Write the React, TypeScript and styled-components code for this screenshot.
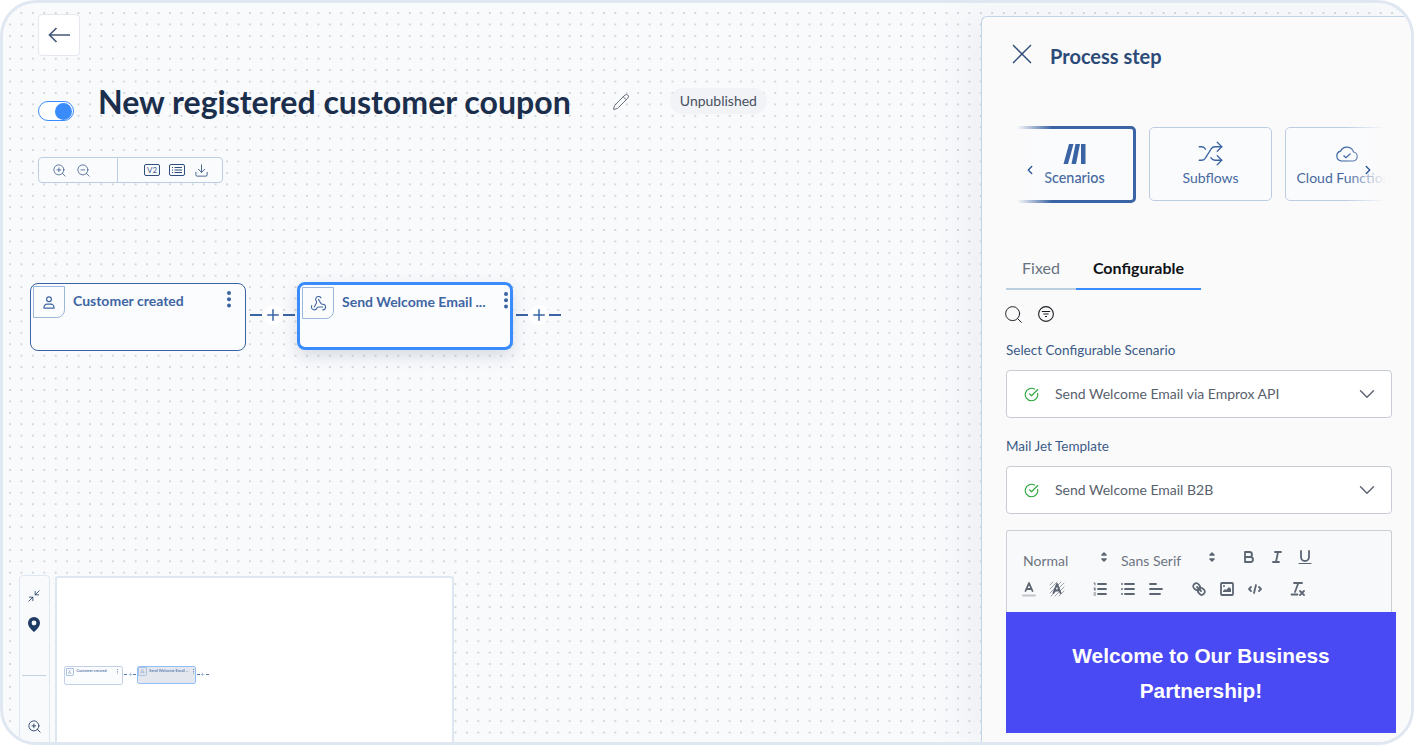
import styled, { createGlobalStyle } from 'styled-components'
import {
  ChevronDown,
  ChevronLeft,
  ChevronRight,
  CircleCheckBig,
  Download,
  Minimize2,
  Pencil,
  Plus,
  Search,
  Shuffle,
  Webhook,
  ZoomIn,
  ZoomOut,
} from 'lucide-react'
import type { ReactNode } from 'react'

const GlobalStyle = createGlobalStyle`
  html, body {
    margin: 0;
    height: 100%;
    overflow: hidden;
    background: #ffffff;
    font-family: 'Lato', 'Liberation Sans', sans-serif;
  }
  * { box-sizing: border-box; }
`

const Frame = styled.div`
  position: relative;
  width: 1414px;
  height: 745px;
  border: 3px solid #dfe7f1;
  border-radius: 36px;
  overflow: hidden;
  background-color: #f9fafc;
  background-image: radial-gradient(circle, #d2d6dc 0.7px, transparent 1.05px);
  background-size: 11.43px 11.43px;
  background-position: 1.3px 4.3px;
`

const Canvas = styled.div`
  padding: 11px 0 0 35px;
`

const BackButton = styled.button`
  display: flex;
  align-items: center;
  justify-content: center;
  width: 42px;
  height: 42px;
  padding: 0;
  background: #ffffff;
  border: 1px solid #e3e8ef;
  border-radius: 4px;
  color: #46597a;
`

const TitleRow = styled.div`
  display: flex;
  align-items: center;
  height: 40px;
  margin-top: 26px;
`

const Toggle = styled.div`
  position: relative;
  flex: none;
  width: 36px;
  height: 20px;
  margin-top: 18px;
  background: #ffffff;
  border: 1px solid #3a8bfb;
  border-radius: 10px;
`

const Knob = styled.span`
  position: absolute;
  top: 0.5px;
  right: 1px;
  width: 17px;
  height: 17px;
  border-radius: 50%;
  background: #3a8bfb;
`

const Title = styled.h1`
  margin: -1px 0 0 24px;
  font-size: 32.1px;
  font-weight: 700;
  line-height: 40px;
  color: #1b2f4d;
  white-space: nowrap;
`

const EditIcon = styled.span`
  display: flex;
  margin-left: 41px;
  color: #5f6774;
`

const Badge = styled.span`
  margin-left: 40px;
  margin-top: -2px;
  padding: 0 10px;
  height: 26px;
  line-height: 26px;
  font-size: 14px;
  color: #48505e;
  background: #f1f3f7;
  border-radius: 13px;
`

const ViewTools = styled.div`
  display: flex;
  width: 185px;
  height: 26px;
  margin-top: 35px;
  background: #fafbfd;
  border: 1px solid #bccfe2;
  border-radius: 4px;
  color: #3f5f8c;
`

const ToolGroup = styled.div<{ $divided?: boolean; $gap: number; $inset: number }>`
  display: flex;
  align-items: center;
  gap: ${(p) => p.$gap}px;
  padding-left: ${(p) => p.$inset}px;
  width: ${(p) => (p.$divided ? 'auto' : '78px')};
  flex: ${(p) => (p.$divided ? 1 : 'none')};
  border-left: ${(p) => (p.$divided ? '1px solid #bccfe2' : 'none')};
`

const VersionTag = styled.span`
  width: 16px;
  height: 12px;
  font-size: 8px;
  line-height: 10px;
  text-align: center;
  color: #3f5f8c;
  border: 1px solid #2f4f7f;
  border-radius: 2px;
`

const GraphPlace = styled.div`
  position: absolute;
  left: 27px;
  top: 280px;
`

const GraphRow = styled.div`
  display: flex;
  align-items: flex-start;
`

const nodeBorder = (selected?: boolean, mini?: boolean) => {
  if (selected) return mini ? '3px solid #7db4fa' : '3px solid #3a8bfb'
  return mini ? '1px solid #b7c7e2' : '1px solid #3a64a3'
}

const Node = styled.div<{ $selected?: boolean; $mini?: boolean }>`
  position: relative;
  display: flex;
  align-items: flex-start;
  width: 216px;
  height: 68px;
  margin-top: ${(p) => (p.$selected ? '-1px' : '0')};
  padding: 2px;
  background: ${(p) => (p.$mini && p.$selected ? '#e0e3ea' : '#fbfcfd')};
  border: ${(p) => nodeBorder(p.$selected, p.$mini)};
  border-radius: 8px;
  box-shadow: ${(p) => (p.$selected && !p.$mini ? '0 6px 16px rgba(40, 60, 100, 0.16)' : 'none')};
`

const NodeIcon = styled.span`
  display: flex;
  align-items: center;
  justify-content: center;
  flex: none;
  width: 32px;
  height: 32px;
  color: #3f65a3;
  border: 1px solid #9ab8dc;
  border-radius: 0 0 8px 0;
`

const NodeName = styled.span`
  margin: 6px 0 0 8px;
  font-size: 14px;
  font-weight: 700;
  line-height: 18px;
  color: #3f65a3;
  white-space: nowrap;
`

const Kebab = styled.svg<{ $selected?: boolean }>`
  position: absolute;
  top: 7px;
  right: ${(p) => (p.$selected ? '2px' : '14px')};
`

const Connector = styled.div<{ $afterSelected?: boolean }>`
  display: flex;
  align-items: center;
  flex: none;
  width: 51px;
  height: 24px;
  margin-top: 20px;
  padding-left: ${(p) => (p.$afterSelected ? '3px' : '4px')};
  color: #3a64a3;
`

const Dash = styled.span`
  width: 12px;
  height: 2px;
  background: #3a64a3;
`

const PlusBubble = styled.span`
  display: flex;
  align-items: center;
  justify-content: center;
  width: 20px;
  height: 20px;
  margin: 0 0.5px;
  background: #ffffff;
  border-radius: 50%;
`

const MiniTools = styled.div`
  position: absolute;
  left: 16px;
  top: 572px;
  display: flex;
  flex-direction: column;
  align-items: center;
  width: 31px;
  height: 175px;
  padding: 13px 1px 0 0;
  background: #f9fafc;
  border: 1px solid #dfe7f1;
  border-radius: 4px;
  color: #1f3a63;
`

const MiniPin = styled.svg`
  margin-top: 14px;
`

const MiniRule = styled.span`
  width: 24px;
  height: 1px;
  margin: 43px 0 43px;
  background: #bfd2e6;
`

const Minimap = styled.div`
  position: absolute;
  left: 52px;
  top: 573px;
  width: 399px;
  height: 175px;
  background: #ffffff;
  border: 2px solid #dfe7f1;
  border-radius: 3px;
`

const MiniPlace = styled.div`
  position: absolute;
  left: 7px;
  top: 88px;
`

const MiniGraph = styled.div`
  zoom: 0.273;
  filter: blur(2px);
  opacity: 0.85;
`

const Panel = styled.aside`
  position: absolute;
  top: 13px;
  left: 978px;
  right: 0;
  bottom: 0;
  padding: 0 19px 0 24px;
  background: #fafafb;
  border-top: 1px solid #c3d4e6;
  border-left: 1px solid #c3d4e6;
  border-top-left-radius: 6px;
  box-shadow: -18px 0 36px rgba(60, 80, 120, 0.06);
`

const PanelHead = styled.div`
  display: flex;
  align-items: flex-start;
  height: 24px;
  margin-top: 27px;
`

const CloseButton = styled.svg`
  flex: none;
  margin: 0 0 0 6px;
  color: #2c4a78;
`

const PanelTitle = styled.h2`
  margin: 0 0 0 18px;
  font-size: 20px;
  font-weight: 700;
  line-height: 24px;
  color: #2c4a78;
`

const Carousel = styled.div`
  position: relative;
  display: flex;
  align-items: center;
  gap: 13px;
  height: 78px;
  margin: 57px 6px 0 0;
  padding-left: 7px;
  overflow: hidden;
`

const TypeCard = styled.div<{ $active?: boolean }>`
  display: flex;
  flex-direction: column;
  align-items: center;
  flex: none;
  width: 123px;
  height: ${(p) => (p.$active ? '77px' : '74px')};
  padding-top: 13px;
  color: #3a64a3;
  background: #fafbfd;
  border: ${(p) => (p.$active ? '3px solid #3a64a3' : '1px solid #bccde2')};
  border-radius: 5px;
`

const CardIcon = styled.span`
  display: flex;
  align-items: center;
  justify-content: center;
  height: 24px;
`

const CardLabel = styled.span<{ $active?: boolean }>`
  margin-top: ${(p) => (p.$active ? '3px' : '4px')};
  font-size: ${(p) => (p.$active ? '14.4px' : '14px')};
  font-weight: ${(p) => (p.$active ? 500 : 400)};
  line-height: 18px;
  color: #46699f;
  white-space: nowrap;
`

const Fade = styled.div<{ $side: 'left' | 'right' }>`
  position: absolute;
  top: 0;
  bottom: 0;
  ${(p) => p.$side}: 0;
  width: ${(p) => (p.$side === 'left' ? '46px' : '40px')};
  background: linear-gradient(
    to ${(p) => p.$side},
    rgba(250, 250, 251, 0),
    rgba(250, 250, 251, 1) ${(p) => (p.$side === 'left' ? '76%' : '100%')}
  );
`

const Arrow = styled.span<{ $side: 'left' | 'right' }>`
  position: absolute;
  top: 38px;
  ${(p) => p.$side}: ${(p) => (p.$side === 'left' ? '17px' : '11px')};
  display: flex;
  color: #2f5a98;
`

const Tabs = styled.div`
  display: flex;
  height: 42px;
  margin-top: 45px;
`

const Tab = styled.div<{ $active?: boolean }>`
  width: ${(p) => (p.$active ? '125px' : '70px')};
  padding-top: 10px;
  font-size: 16px;
  line-height: 20px;
  text-align: center;
  font-weight: ${(p) => (p.$active ? 700 : 400)};
  color: ${(p) => (p.$active ? '#0f1216' : '#69737f')};
  border-bottom: 2px solid ${(p) => (p.$active ? '#3a8bfb' : '#bccfe0')};
`

const SearchRow = styled.div`
  display: flex;
  align-items: center;
  gap: 14px;
  height: 16px;
  margin: 16px 0 0 -3px;
  color: #1a1d22;
`

const FieldLabel = styled.label`
  display: block;
  margin-top: 20px;
  font-size: 13.5px;
  line-height: 16px;
  color: #3b5a85;
`

const SelectBox = styled.div`
  display: flex;
  align-items: center;
  height: 48px;
  margin-top: 12px;
  padding: 0 11px 0 17px;
  background: #ffffff;
  border: 1px solid #c8ccd4;
  border-radius: 4px;
  font-size: 14px;
  color: #59616d;
`

const SelectValue = styled.span`
  flex: 1;
  margin: -2px 0 0 16px;
`

const Editor = styled.div`
  margin-top: 16px;
`

const EditorToolbar = styled.div`
  height: 82px;
  padding: 16px 8px 0;
  background: #f8f9fb;
  border: 1px solid #cccfd5;
  border-bottom: none;
  border-radius: 3px 3px 0 0;
`

const EditorRow = styled.div`
  display: flex;
  align-items: center;
  height: 28px;
  color: #5c6672;
`

const EditorGroup = styled.div<{ $raised?: boolean }>`
  display: flex;
  margin: ${(p) => (p.$raised ? '-8px 15px 0 14px' : '0 15px 0 0')};
`

const EditorButton = styled.span`
  display: flex;
  align-items: center;
  justify-content: center;
  width: 28px;
  height: 24px;
`

const FontPicker = styled.div<{ $width: number }>`
  display: flex;
  align-items: center;
  justify-content: space-between;
  width: ${(p) => p.$width}px;
  height: 28px;
  padding: 0 0 2px 8px;
  font-size: 14px;
  color: #6d7580;
`

const PickerArrows = styled.svg`
  margin-top: -6px;
`

const EmailHeader = styled.div`
  width: 390px;
  height: 121px;
  padding-top: 27px;
  font-family: 'Liberation Sans', Arial, sans-serif;
  font-size: 20.8px;
  font-weight: 700;
  line-height: 34.5px;
  text-align: center;
  color: #ffffff;
  background: #4a4af4;
`

const QuillIcon = ({ children }: { children: ReactNode }) => (
  <svg
    width='18'
    height='18'
    viewBox='0 0 18 18'
    fill='none'
    stroke='currentColor'
    strokeWidth='1.8'
    strokeLinecap='round'
    strokeLinejoin='round'
  >
    {children}
  </svg>
)

const NodeMenu = ({ selected }: { selected?: boolean }) => (
  <Kebab $selected={selected} width='4' height='18' viewBox='0 0 4 18' fill='#3a64a3'>
    <circle cx='2' cy='2' r='2' />
    <circle cx='2' cy='8.3' r='2' />
    <circle cx='2' cy='14.6' r='2' />
  </Kebab>
)

const AddStep = ({ afterSelected }: { afterSelected?: boolean }) => (
  <Connector $afterSelected={afterSelected}>
    <Dash />
    <PlusBubble>
      <Plus size={18} strokeWidth={2} />
    </PlusBubble>
    <Dash />
  </Connector>
)

const FlowGraph = ({ mini }: { mini?: boolean }) => (
  <GraphRow>
    <Node $mini={mini}>
      <NodeIcon>
        <svg width='12' height='13' viewBox='0 0 12 13' fill='none' stroke='currentColor' strokeWidth='1.2'>
          <circle cx='6' cy='3.2' r='2.4' />
          <path d='M1 12.2h10v-1a3 3 0 0 0-3-3H4a3 3 0 0 0-3 3Z' />
        </svg>
      </NodeIcon>
      <NodeName>Customer created</NodeName>
      <NodeMenu />
    </Node>
    <AddStep />
    <Node $selected $mini={mini}>
      <NodeIcon>
        <Webhook size={17} strokeWidth={1.5} />
      </NodeIcon>
      <NodeName>Send Welcome Email ...</NodeName>
      <NodeMenu selected />
    </Node>
    <AddStep afterSelected />
  </GraphRow>
)

const ConfigSelect = ({ value }: { value: string }) => (
  <SelectBox>
    <CircleCheckBig size={15} color='#2aa63a' strokeWidth={1.8} />
    <SelectValue>{value}</SelectValue>
    <ChevronDown size={26} color='#5a6270' strokeWidth={1.3} />
  </SelectBox>
)

const Arrows = () => (
  <PickerArrows
    width='18'
    height='18'
    viewBox='0 0 18 18'
    fill='#5c6672'
    stroke='#5c6672'
    strokeWidth='1.6'
    strokeLinejoin='round'
  >
    <polygon points='7 11 9 13 11 11' />
    <polygon points='7 7 9 5 11 7' />
  </PickerArrows>
)

export default function App() {
  return (
    <>
      <GlobalStyle />
      <Frame>
        <Canvas>
          <BackButton>
            <svg width='22' height='20' viewBox='0 0 22 20' fill='none' stroke='currentColor' strokeWidth='1.7'>
              <path d='M1.5 10H22M8.5 3l-7 7 7 7' />
            </svg>
          </BackButton>

          <TitleRow>
            <Toggle>
              <Knob />
            </Toggle>
            <Title>New registered customer coupon</Title>
            <EditIcon>
              <Pencil size={18} strokeWidth={1.25} />
            </EditIcon>
            <Badge>Unpublished</Badge>
          </TitleRow>

          <ViewTools>
            <ToolGroup $gap={9} $inset={13}>
              <ZoomIn size={15} strokeWidth={1.3} />
              <ZoomOut size={15} strokeWidth={1.3} />
            </ToolGroup>
            <ToolGroup $divided $gap={9} $inset={26}>
              <VersionTag>V2</VersionTag>
              <svg width='16' height='12' viewBox='0 0 16 12' fill='none' stroke='#2f4f7f'>
                <rect x='0.5' y='0.5' width='15' height='11' rx='1.5' />
                <path d='M3 3.5h1M3 6h1M3 8.5h1M5.5 3.5H13M5.5 6H13M5.5 8.5H13' />
              </svg>
              <Download size={15} strokeWidth={1.5} />
            </ToolGroup>
          </ViewTools>
        </Canvas>

        <GraphPlace>
          <FlowGraph />
        </GraphPlace>

        <MiniTools>
          <Minimize2 size={14} strokeWidth={1.4} />
          <MiniPin width='12' height='15' viewBox='0 0 12 15'>
            <path
              fill='#1f3a63'
              fillRule='evenodd'
              d='M6 0a6 6 0 0 1 6 6c0 3.6-3.6 7-6 9-2.4-2-6-5.4-6-9a6 6 0 0 1 6-6Zm0 3.6a2.4 2.4 0 1 0 0 4.8 2.4 2.4 0 0 0 0-4.8Z'
            />
          </MiniPin>
          <MiniRule />
          <ZoomIn size={15} strokeWidth={1.4} />
        </MiniTools>

        <Minimap>
          <MiniPlace>
            <MiniGraph>
              <FlowGraph mini />
            </MiniGraph>
          </MiniPlace>
        </Minimap>

        <Panel>
          <PanelHead>
            <CloseButton width='20' height='20' viewBox='0 0 20 20' fill='none' stroke='currentColor' strokeWidth='1.4'>
              <path d='M1 1l18 18M19 1L1 19' />
            </CloseButton>
            <PanelTitle>Process step</PanelTitle>
          </PanelHead>

          <Carousel>
            <TypeCard $active>
              <CardIcon>
                <svg width='24' height='22' viewBox='0 0 24 22' fill='#3a64a3'>
                  <path d='M6 1h4.5L5 21H0.5ZM12.5 1H17L13 21H8.5ZM18 1h4.5V21H18Z' />
                </svg>
              </CardIcon>
              <CardLabel $active>Scenarios</CardLabel>
            </TypeCard>
            <TypeCard>
              <CardIcon>
                <Shuffle size={27} strokeWidth={1.15} />
              </CardIcon>
              <CardLabel>Subflows</CardLabel>
            </TypeCard>
            <TypeCard>
              <CardIcon>
                <svg width='24' height='24' viewBox='0 0 24 24' fill='none' stroke='currentColor' strokeWidth='1.2'>
                  <path d='M6.5 20A5 5 0 0 1 5.5 10.2 7 7 0 0 1 18.6 11 4.6 4.6 0 0 1 18.5 20Z' />
                  <path d='M8.5 14.5l2.5 2.3 4.5-4.3' />
                </svg>
              </CardIcon>
              <CardLabel>Cloud Functions</CardLabel>
            </TypeCard>
            <Fade $side='left' />
            <Fade $side='right' />
            <Arrow $side='left'>
              <ChevronLeft size={14} strokeWidth={2.4} />
            </Arrow>
            <Arrow $side='right'>
              <ChevronRight size={14} strokeWidth={2.4} />
            </Arrow>
          </Carousel>

          <Tabs>
            <Tab>Fixed</Tab>
            <Tab $active>Configurable</Tab>
          </Tabs>

          <SearchRow>
            <Search size={21} strokeWidth={1.1} />
            <svg width='16' height='16' viewBox='0 0 16 16' fill='none' stroke='currentColor' strokeWidth='1.1'>
              <circle cx='8' cy='8' r='7.4' />
              <path d='M3.8 5.5h8.4M5.4 8h5.2M7 10.5h2' />
            </svg>
          </SearchRow>

          <FieldLabel>Select Configurable Scenario</FieldLabel>
          <ConfigSelect value='Send Welcome Email via Emprox API' />

          <FieldLabel>Mail Jet Template</FieldLabel>
          <ConfigSelect value='Send Welcome Email B2B' />

          <Editor>
            <EditorToolbar>
              <EditorRow>
                <FontPicker $width={98}>
                  Normal
                  <Arrows />
                </FontPicker>
                <FontPicker $width={108}>
                  Sans Serif
                  <Arrows />
                </FontPicker>
                <EditorGroup $raised>
                  <EditorButton>
                    <QuillIcon>
                      <path d='M5 4h4.5a2.5 2.5 0 0 1 0 5H5ZM5 9h5.5a2.5 2.5 0 0 1 0 5H5Z' />
                    </QuillIcon>
                  </EditorButton>
                  <EditorButton>
                    <QuillIcon>
                      <path d='M7 4h6M5 14h6M8 14l2-10' />
                    </QuillIcon>
                  </EditorButton>
                  <EditorButton>
                    <QuillIcon>
                      <path d='M5 3v6a4 4 0 0 0 8 0V3' />
                      <path d='M3 15.5h12' strokeWidth='1' />
                    </QuillIcon>
                  </EditorButton>
                </EditorGroup>
              </EditorRow>
              <EditorRow>
                <EditorGroup>
                  <EditorButton>
                    <QuillIcon>
                      <path d='M3 15.5h12' stroke='#c2c6cc' strokeWidth='2' />
                      <path d='M5.5 11 9 3l3.5 8M6.5 9h5' />
                    </QuillIcon>
                  </EditorButton>
                  <EditorButton>
                    <QuillIcon>
                      <path
                        d='M2 5l3-3M2 9l7-7M2 13L13 2M3 16 16 3M7 16l9-9M11 16l5-5'
                        stroke='#9fa5ad'
                        strokeWidth='1'
                      />
                      <path d='M5.5 13 9 4l3.5 9M6.5 10.5h5' strokeWidth='2' />
                    </QuillIcon>
                  </EditorButton>
                </EditorGroup>
                <EditorGroup>
                  <EditorButton>
                    <QuillIcon>
                      <path d='M7 4h8M7 9h8M7 14h8' />
                      <path d='M3 3h1v2M3 8h1.5L3 10h1.5M3 13h1.5M3 15h1.5' strokeWidth='0.9' />
                    </QuillIcon>
                  </EditorButton>
                  <EditorButton>
                    <QuillIcon>
                      <path d='M6 4h9M6 9h9M6 14h9M3 4h.01M3 9h.01M3 14h.01' />
                    </QuillIcon>
                  </EditorButton>
                  <EditorButton>
                    <QuillIcon>
                      <path d='M3 4h6M3 9h12M3 14h10' />
                    </QuillIcon>
                  </EditorButton>
                </EditorGroup>
                <EditorGroup>
                  <EditorButton>
                    <QuillIcon>
                      <path d='M7 7l4 4' />
                      <path d='M8.9 4.577a3.476 3.476 0 0 1 .36 4.679A3.476 3.476 0 0 1 4.577 8.9C3.185 7.5 2.035 6.4 4.217 4.217S7.5 3.185 8.9 4.577Z' />
                      <path d='M13.423 9.1a3.476 3.476 0 0 0-4.679-.36 3.476 3.476 0 0 0 .36 4.679c1.392 1.392 2.5 2.542 4.679.36S14.815 10.5 13.423 9.1Z' />
                    </QuillIcon>
                  </EditorButton>
                  <EditorButton>
                    <QuillIcon>
                      <rect x='3' y='3' width='12' height='12' rx='1' />
                      <circle cx='6' cy='6' r='1' fill='currentColor' stroke='none' />
                      <path d='M5 12v-1l2-2 1 1 3-3 2 2v3Z' fill='currentColor' stroke='none' />
                    </QuillIcon>
                  </EditorButton>
                  <EditorButton>
                    <QuillIcon>
                      <path d='M5 7 3 9l2 2M13 7l2 2-2 2M10 5 8 13' />
                    </QuillIcon>
                  </EditorButton>
                </EditorGroup>
                <EditorGroup>
                  <EditorButton>
                    <QuillIcon>
                      <path d='M5 3h8M6 12 9.35 3M11 11l4 4M15 11l-4 4M2.5 14.5h6' />
                    </QuillIcon>
                  </EditorButton>
                </EditorGroup>
              </EditorRow>
            </EditorToolbar>
            <EmailHeader>
              Welcome to Our Business
              <br />
              Partnership!
            </EmailHeader>
          </Editor>
        </Panel>
      </Frame>
    </>
  )
}
